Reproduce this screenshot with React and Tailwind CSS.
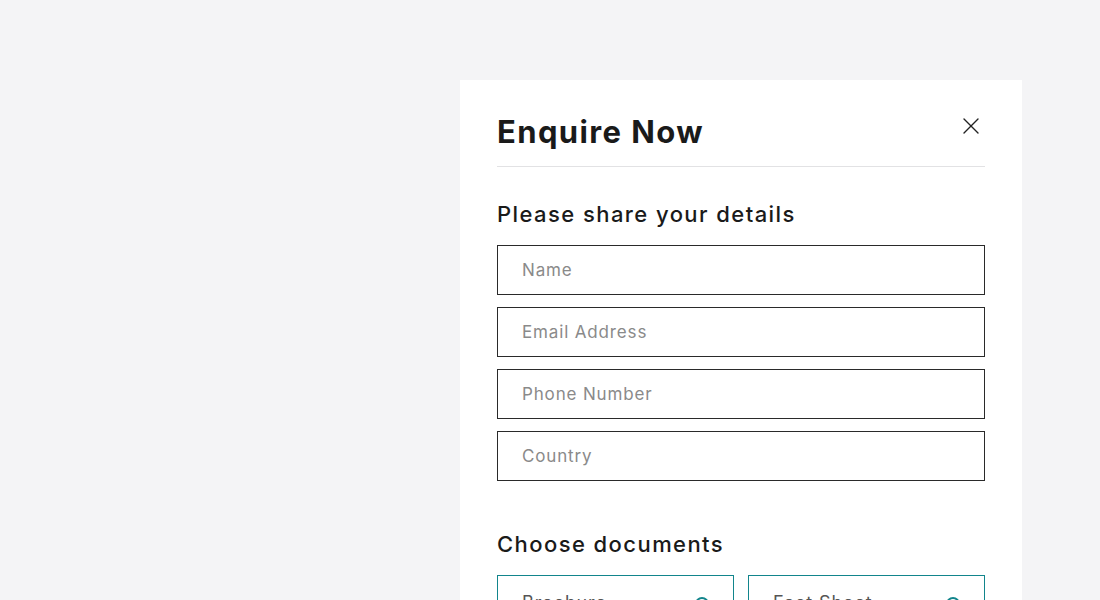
import { X } from "lucide-react";

export default function App() {
  const fields = ["Name", "Email Address", "Phone Number", "Country"];

  return (
    <div className="h-[600px] overflow-hidden bg-[#f4f4f6] font-['Inter','Liberation_Sans',sans-serif] text-[#1a1a1a]">
      <div className="flex justify-end pt-20 pr-[78px]">
        <div className="w-[562px] bg-white px-[37px] pt-[30px] pb-10">
          <div className="flex items-start justify-between border-b border-[#e2e2e4] pb-[12px]">
            <h1 className="text-[31px] font-bold leading-[44px] tracking-[0.045em]">Enquire Now</h1>
            <button className="mt-[2px] text-[#222]">
              <X size={28} strokeWidth={1.2} />
            </button>
          </div>

          <h2 className="mt-[32px] text-[22px] font-medium leading-[30px] tracking-[0.065em]">
            Please share your details
          </h2>

          <div className="mt-[16px] flex flex-col gap-3">
            {fields.map((f) => (
              <input
                key={f}
                placeholder={f}
                className="h-[50px] w-full border-[1.5px] border-[#2a2a2a] px-6 text-[17px] tracking-[0.05em] placeholder:text-[#8a8a8a] outline-none"
              />
            ))}
          </div>

          <h2 className="mt-[48px] text-[22px] font-medium leading-[30px] tracking-[0.065em]">
            Choose documents
          </h2>

          <div className="mt-[16px] grid grid-cols-2 gap-[14px]">
            {["Brochure", "Fact Sheet"].map((d) => (
              <div
                key={d}
                className="flex h-[60px] items-start justify-between border-[1.5px] border-[#12858c] pl-6 pr-6 pt-[15px]"
              >
                <span className="text-[18px] leading-[24px] tracking-[0.05em] text-[#555]">{d}</span>
                <span className="mt-[6px] h-[14px] w-[14px] rounded-full border-2 border-[#12858c]" />
              </div>
            ))}
          </div>
        </div>
      </div>
    </div>
  );
}
